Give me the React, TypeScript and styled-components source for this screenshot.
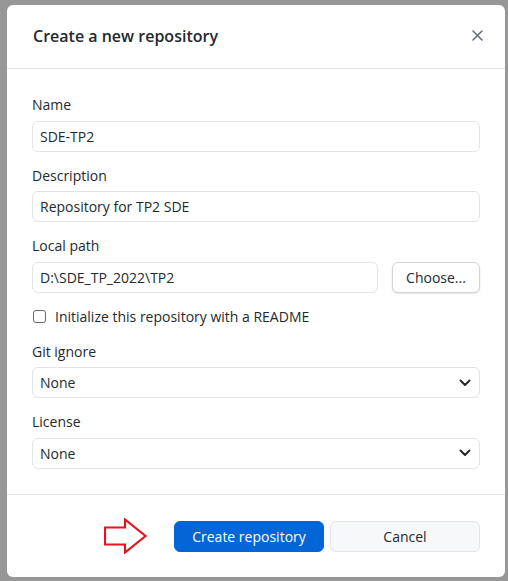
import React from "react";
import styled, { createGlobalStyle } from "styled-components";

const Global = createGlobalStyle`
  html, body { margin: 0; padding: 0; }
  body {
    background: #979797;
    font-family: "Open Sans", "Noto Sans", sans-serif;
    color: #24292e;
  }
  * { box-sizing: border-box; }
`;

const Backdrop = styled.div`
  width: 508px;
  height: 581px;
  padding: 5px 3px 4px 7px;
  display: flex;
`;

const Dialog = styled.div`
  flex: 1;
  background: #fff;
  border-radius: 6px;
  display: flex;
  flex-direction: column;
  overflow: hidden;
`;

const Header = styled.div`
  height: 64px;
  border-bottom: 1px solid #e1e4e8;
  display: flex;
  align-items: center;
  justify-content: space-between;
  padding: 0 18px 2px 26px;
`;

const Title = styled.h1`
  margin: 0;
  font-size: 16px;
  font-weight: 600;
  color: #24292e;
`;

const Close = styled.button`
  border: none;
  background: none;
  padding: 4px;
  display: flex;
  cursor: pointer;
`;

const Body = styled.div`
  flex: 1;
  padding: 26px 25px 0 25px;
  display: flex;
  flex-direction: column;
`;

const Field = styled.div`
  display: flex;
  flex-direction: column;
  margin-bottom: 14px;
`;

const Label = styled.label`
  font-size: 14px;
  line-height: 20px;
  color: #24292e;
  margin-bottom: 5.5px;
`;

const Row = styled.div`
  display: flex;
  gap: 14px;
`;

const Input = styled.div`
  flex: 1 1 auto;
  min-width: 0;
  height: 31px;
  border: 1px solid #e1e4e8;
  border-radius: 6px;
  padding: 0 7px;
  display: flex;
  align-items: center;
  justify-content: space-between;
  font-size: 14px;
  color: #24292e;
`;

const Chevron = styled.svg`
  width: 12px;
  height: 8px;
  margin-right: 1px;
`;

const SmallButton = styled.button`
  flex: none;
  width: 88px;
  height: 31px;
  border: 1px solid #d1d5da;
  border-radius: 6px;
  background: #fff;
  box-shadow: 0 1px 2px rgba(0, 0, 0, 0.12);
  font-family: inherit;
  font-size: 14px;
  color: #24292e;
  padding: 0;
`;

const CheckRow = styled.label`
  display: flex;
  align-items: center;
  gap: 9px;
  height: 20px;
  margin: 0 0 15px 1px;
  font-size: 14px;
  color: #24292e;
`;

const Box = styled.span`
  width: 13px;
  height: 13px;
  border: 1px solid #6a6a6a;
  border-radius: 3px;
`;

const Footer = styled.div`
  height: 83px;
  border-top: 1px solid #e1e4e8;
  padding: 0 25px 0;
  display: flex;
  justify-content: flex-end;
  align-items: center;
  gap: 6px;
`;

const Arrow = styled.svg`
  width: 44px;
  height: 36px;
  margin-right: 20px;
`;

const Button = styled.button<{ $primary?: boolean }>`
  width: 150px;
  height: 31px;
  border-radius: 6px;
  font-family: inherit;
  font-size: 14px;
  padding: 0;
  border: 1px solid ${(p) => (p.$primary ? "#0366d6" : "#e1e4e8")};
  background: ${(p) => (p.$primary ? "#0366d6" : "#f6f8fa")};
  color: ${(p) => (p.$primary ? "#fff" : "#24292e")};
`;

const ChevronIcon = () => (
  <Chevron viewBox="0 0 12 8">
    <path d="M1.5 1.5 L6 6 L10.5 1.5" fill="none" stroke="#24292e" strokeWidth="2" strokeLinecap="round" strokeLinejoin="round" />
  </Chevron>
);

export default function App() {
  return (
    <>
      <Global />
      <Backdrop>
        <Dialog>
          <Header>
            <Title>Create a new repository</Title>
            <Close aria-label="Close">
              <svg width="11" height="11" viewBox="0 0 11 11">
                <path d="M1 1 L10 10 M10 1 L1 10" stroke="#6a737d" strokeWidth="1.6" strokeLinecap="round" />
              </svg>
            </Close>
          </Header>
          <Body>
            <Field>
              <Label>Name</Label>
              <Input>SDE-TP2</Input>
            </Field>
            <Field>
              <Label>Description</Label>
              <Input>Repository for TP2 SDE</Input>
            </Field>
            <Field>
              <Label>Local path</Label>
              <Row>
                <Input>D:\SDE_TP_2022\TP2</Input>
                <SmallButton>Choose...</SmallButton>
              </Row>
            </Field>
            <CheckRow>
              <Box />
              Initialize this repository with a README
            </CheckRow>
            <Field>
              <Label>Git ignore</Label>
              <Input>
                None
                <ChevronIcon />
              </Input>
            </Field>
            <Field>
              <Label>License</Label>
              <Input>
                None
                <ChevronIcon />
              </Input>
            </Field>
          </Body>
          <Footer>
            <Arrow viewBox="0 0 44 36">
              <polygon points="1,9.5 21,9.5 21,1.5 41.5,18 21,34.5 21,26.5 1,26.5" fill="none" stroke="#e5131d" strokeWidth="2.2" />
            </Arrow>
            <Button $primary>Create repository</Button>
            <Button>Cancel</Button>
          </Footer>
        </Dialog>
      </Backdrop>
    </>
  );
}
